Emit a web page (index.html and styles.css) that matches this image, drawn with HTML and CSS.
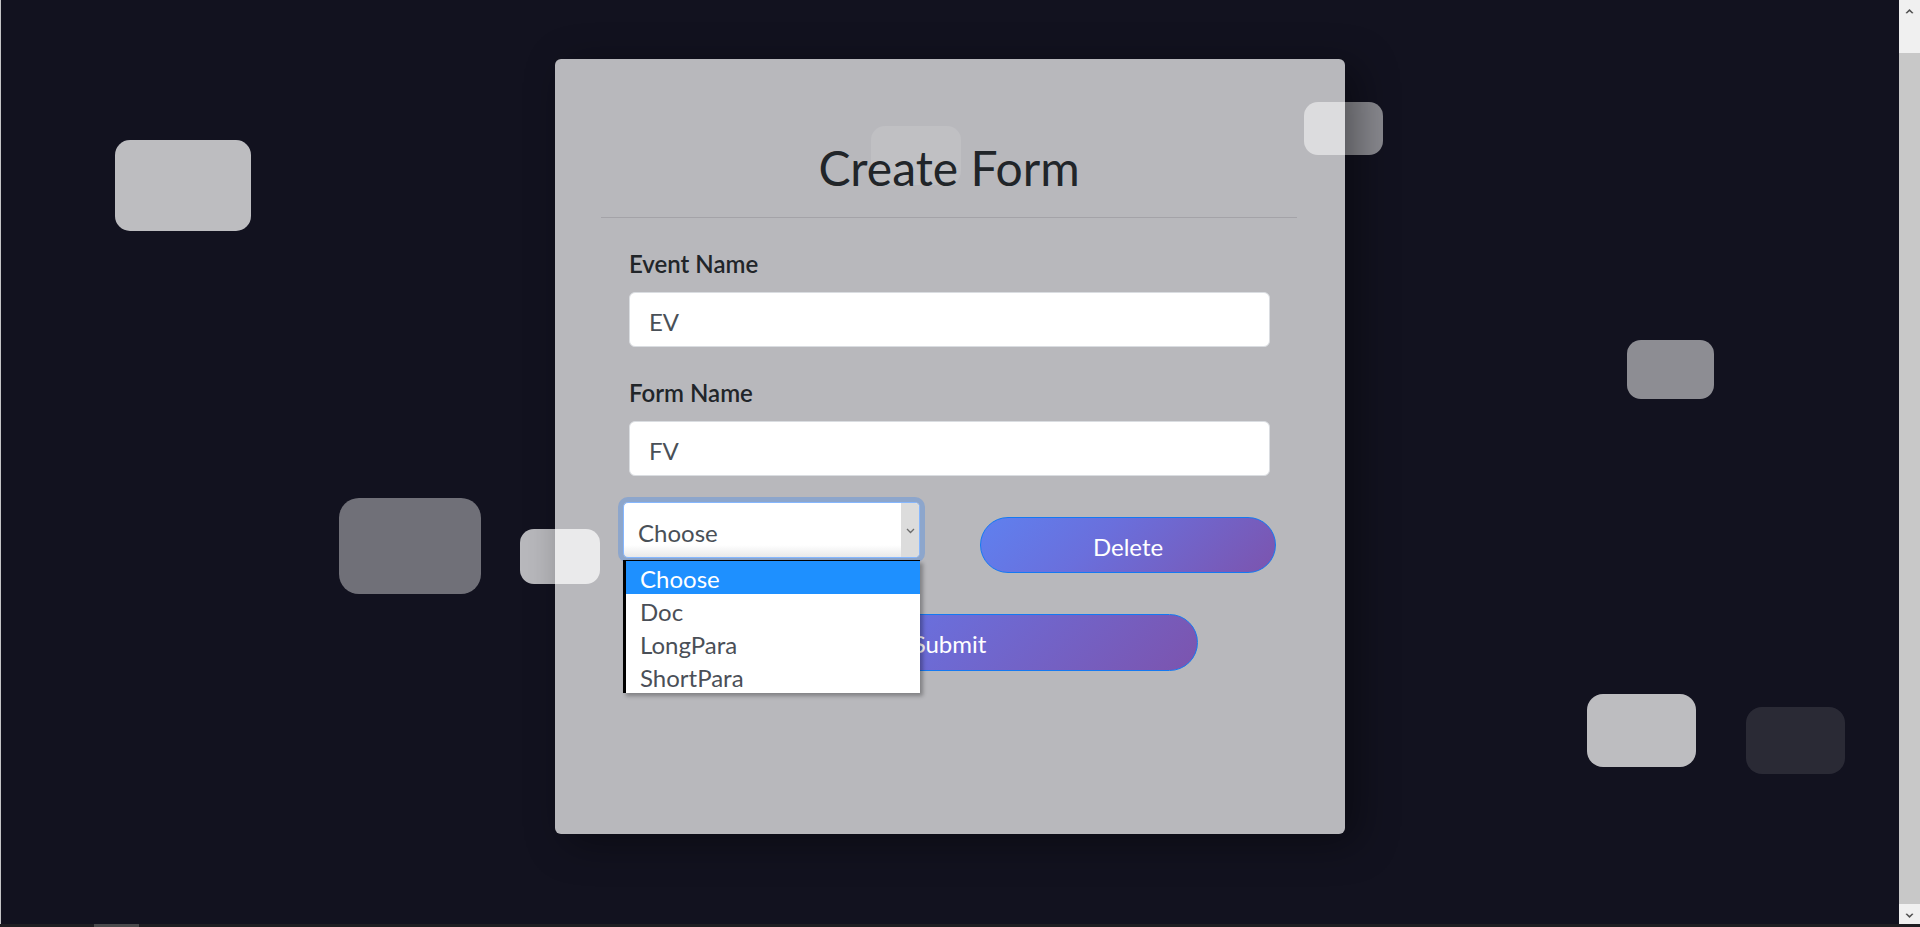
FILE: index.html
```html
<!DOCTYPE html>
<html lang="en">
<head>
<meta charset="utf-8">
<title>Create Form</title>
<link rel="stylesheet" href="styles.css">
</head>
<body>
<div class="screen">
  <div class="viewport">
    <main class="page">
      <ul class="squares">
        <li class="sq sq1"></li>
        <li class="sq sq2"></li>
        <li class="sq sq3"></li>
        <li class="sq sq4"></li>
        <li class="sq sq5"></li>
        <li class="sq sq6"></li>
        <li class="sq sq7"></li>
        <li class="sq sq8"></li>
      </ul>
      <section class="card">
        <h1 class="title">Create Form</h1>
        <hr class="divider">
        <form class="form">
          <div class="field">
            <label class="label" for="ev">Event Name</label>
            <input class="input" id="ev" type="text" value="EV">
          </div>
          <div class="field">
            <label class="label" for="fv">Form Name</label>
            <input class="input" id="fv" type="text" value="FV">
          </div>
          <div class="row">
            <div class="select-wrap">
              <div class="select">
                <span class="select-text">Choose</span>
                <span class="select-strip">
                  <svg class="chev" width="9" height="6" viewBox="0 0 9 6"><polyline points="1,1 4.5,4.5 8,1" fill="none" stroke="#6b6b6b" stroke-width="1.3"/></svg>
                </span>
              </div>
              <ul class="dropdown">
                <li class="opt opt-active">Choose</li>
                <li class="opt">Doc</li>
                <li class="opt">LongPara</li>
                <li class="opt">ShortPara</li>
              </ul>
            </div>
            <button class="btn btn-delete" type="button">Delete</button>
          </div>
          <div class="submit-row">
            <button class="btn btn-submit" type="button">Submit</button>
          </div>
        </form>
      </section>
    </main>
    <div class="vscroll">
      <div class="sb-btn sb-up">
        <svg width="9" height="6" viewBox="0 0 9 6"><path d="M0.5 5 L4.5 1 L8.5 5 L7 5.6 L4.5 3.2 L2 5.6 Z" fill="#505050"/></svg>
      </div>
      <div class="sb-gap"></div>
      <div class="sb-thumb"></div>
      <div class="sb-btn sb-down">
        <svg width="9" height="6" viewBox="0 0 9 6"><path d="M0.5 1 L4.5 5 L8.5 1 L7 0.4 L4.5 2.8 L2 0.4 Z" fill="#505050"/></svg>
      </div>
    </div>
  </div>
  <div class="hscroll"><span class="hthumb"></span></div>
</div>
</body>
</html>
```
FILE: styles.css
```css
html, body {
  margin: 0;
  padding: 0;
  height: 100%;
  overflow: hidden;
}

body {
  background: #12121f;
  font-family: Lato, "Open Sans", "Noto Sans", sans-serif;
  color: #212529;
}

.screen {
  display: flex;
  flex-direction: column;
  height: 927px;
}

.viewport {
  display: flex;
  flex: 1;
  min-height: 0;
}

.page {
  flex: 1;
  position: relative;
  display: flex;
  justify-content: center;
  align-items: flex-start;
  padding-top: 59px;
  border-left: 1px solid #c4c4c6;
  overflow: hidden;
}

/* floating background squares */
.squares {
  list-style: none;
  margin: 0;
  padding: 0;
}

.sq {
  position: absolute;
  background: #fff;
  border-radius: 15px;
}

.sq1 { left: 114px; top: 140px; width: 136px; height: 91px; opacity: .72; }
.sq2 { left: 870px; top: 126px; width: 90px; height: 59px; opacity: .11; border-radius: 14px; }
.sq3 { left: 1303px; top: 102px; width: 79px; height: 53px; opacity: .5; border-radius: 14px; }
.sq4 { left: 1626px; top: 340px; width: 87px; height: 59px; opacity: .52; border-radius: 14px; }
.sq5 { left: 338px; top: 498px; width: 142px; height: 96px; opacity: .4; border-radius: 20px; }
.sq6 { left: 519px; top: 529px; width: 80px; height: 55px; opacity: .7; border-radius: 14px; }
.sq7 { left: 1586px; top: 694px; width: 109px; height: 73px; opacity: .72; border-radius: 16px; }
.sq8 { left: 1745px; top: 707px; width: 99px; height: 67px; opacity: .1; border-radius: 16px; }

/* card */
.card {
  position: relative;
  z-index: 1;
  width: 790px;
  height: 775px;
  box-sizing: border-box;
  padding: 80px 48px 0 46px;
  background: rgba(255, 255, 255, .7);
  border-radius: 6px;
  box-shadow: 12px 8px 40px rgba(0, 0, 0, .4);
}

.title {
  margin: 0;
  font-size: 48px;
  line-height: 57.6px;
  font-weight: 400;
  text-align: center;
  color: #212529;
}

.divider {
  margin: 20px 0 0;
  height: 0;
  border: 0;
  border-top: 1px solid #a4a3a8;
}

.form {
  padding: 26px 27px 0 28px;
}

.field + .field {
  margin-top: 26px;
}

.label {
  display: block;
  margin-bottom: 10px;
  padding-top: 2px;
  font-size: 24px;
  line-height: 36px;
  font-weight: 600;
  color: #212529;
}

.input {
  display: block;
  width: 100%;
  height: 55px;
  box-sizing: border-box;
  margin: 0;
  padding: 4px 19px 0;
  font-family: inherit;
  font-size: 24px;
  line-height: 36px;
  color: #495057;
  background: #fff;
  border: 1px solid #dadde1;
  border-radius: 6px;
  outline: none;
}

.row {
  display: flex;
  justify-content: space-between;
  align-items: flex-start;
  margin: 26px -6px 0 -6px;
}

.select-wrap {
  position: relative;
  width: 297px;
}

.select {
  display: flex;
  align-items: center;
  height: 56px;
  box-sizing: border-box;
  padding-top: 6px;
  padding-left: 14px;
  background: linear-gradient(to bottom, #fff 78%, #e9e9e9 100%);
  border: 1px solid #86b7fe;
  border-radius: 5px;
  box-shadow: 0 0 0 5px rgba(13, 110, 253, .25);
  overflow: hidden;
}

.select-text {
  flex: 1;
  font-size: 24px;
  line-height: 36px;
  color: #495057;
}

.select-strip {
  align-self: stretch;
  margin-top: -6px;
  width: 18px;
  display: flex;
  align-items: center;
  justify-content: center;
  background: #dcdcdc;
}

.chev {
  display: block;
  margin-top: 2px;
}

.dropdown {
  position: absolute;
  left: 0;
  top: 58px;
  width: 297px;
  box-sizing: border-box;
  margin: 0;
  padding: 0;
  list-style: none;
  background: #fff;
  border-top: 1px solid #000;
  border-left: 3px solid #000;
  box-shadow: 3px 3px 4px rgba(0, 0, 0, .3);
  z-index: 5;
}

.opt {
  height: 33px;
  box-sizing: border-box;
  padding: 2px 0 0 14px;
  font-size: 24px;
  line-height: 31px;
  color: #4a4f57;
}

.opt-active {
  background: #1e90ff;
  color: #fff;
}

.btn {
  box-sizing: border-box;
  height: 56px;
  padding: 4px 0 0;
  font-family: inherit;
  font-size: 24px;
  line-height: 36px;
  color: #fff;
  border: 1px solid #1479f2;
  border-radius: 30px;
  background: linear-gradient(135deg, #5f80ef 0%, #6a6fdc 40%, #7c54ae 100%);
  cursor: pointer;
}

.btn-delete {
  width: 296px;
  margin-top: 15px;
}

.submit-row {
  display: flex;
  justify-content: center;
  margin-top: 41px;
}

.btn-submit {
  width: 496px;
  height: 57px;
}

/* fake window scrollbars */
.vscroll {
  width: 21px;
  display: flex;
  flex-direction: column;
  background: #f0f0f0;
}

.sb-btn {
  display: flex;
  justify-content: center;
  background: #f0f0f0;
}

.sb-up {
  height: 21px;
  align-items: flex-start;
}

.sb-up svg {
  margin-top: 8px;
}

.sb-gap {
  height: 32px;
}

.sb-thumb {
  height: 851px;
  background: #c8c8c8;
}

.sb-down {
  height: 20px;
  align-items: flex-start;
}

.sb-down svg {
  margin-top: 9px;
}

.hscroll {
  height: 3px;
  display: flex;
  background: #1e1e22;
}

.hthumb {
  margin-left: 94px;
  width: 45px;
  background: #4a4a4c;
}
```
